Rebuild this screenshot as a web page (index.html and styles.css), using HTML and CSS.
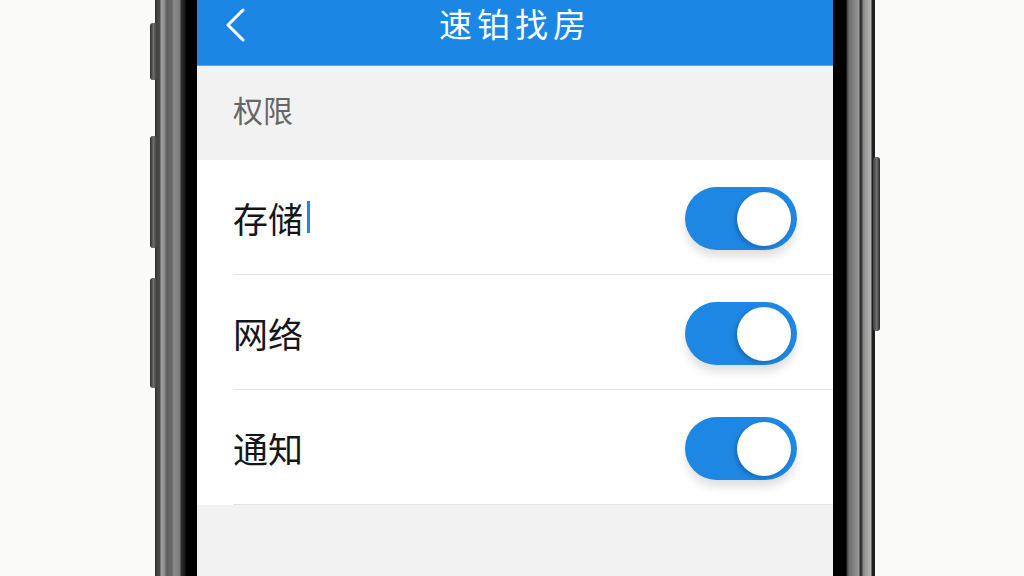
FILE: index.html
```html
<!DOCTYPE html>
<html lang="zh-CN">
<head>
    <meta charset="UTF-8">
    <meta name="viewport" content="width=device-width, initial-scale=1.0">
    <title>速铂找房 - 权限</title>
    <link rel="stylesheet" href="styles.css">
</head>
<body>
    <div class="phone">
        <span class="side-btn btn-left btn-1"></span>
        <span class="side-btn btn-left btn-2"></span>
        <span class="side-btn btn-left btn-3"></span>
        <span class="side-btn btn-right"></span>

        <div class="bezel bezel-left"></div>

        <div class="screen">
            <header class="topbar">
                <svg class="back" width="24" height="34" viewBox="0 0 24 34">
                    <polyline points="19,2 4,17 19,32" fill="none" stroke="#fff" stroke-width="3" stroke-linecap="round" stroke-linejoin="round"/>
                </svg>
                <h1>速铂找房</h1>
            </header>

            <div class="section-title">权限</div>

            <ul class="settings">
                <li class="row">
                    <span class="label">存储<span class="caret"></span></span>
                    <span class="toggle on"><span class="knob"></span></span>
                </li>
                <li class="row">
                    <span class="label">网络</span>
                    <span class="toggle on"><span class="knob"></span></span>
                </li>
                <li class="row">
                    <span class="label">通知</span>
                    <span class="toggle on"><span class="knob"></span></span>
                </li>
            </ul>

            <div class="rest"></div>
        </div>

        <div class="bezel bezel-right"></div>
    </div>
</body>
</html>
```

FILE: styles.css
```css
body {
    margin: 0;
    height: 576px;
    overflow: hidden;
    background: #fafaf8;
    font-family: "Noto Sans CJK SC", "Noto Sans", sans-serif;
}

.phone {
    position: relative;
    display: flex;
    width: 720px;
    height: 576px;
    margin-left: 155px;
}

/* frame */
.bezel {
    width: 42px;
    flex-shrink: 0;
}

.bezel-left {
    background: linear-gradient(to right,
        #2a2a2a 0, #444 2px, #4a4a4a 5px,
        #a0a0a0 6px, #8a8a8a 10px, #5e5e5e 11px,
        #6a6a6a 17px, #8c8c8c 19px, #7a7a7a 25px,
        #2e2e2e 26px, #1a1a1a 30px, #000 31px, #000 42px);
}

.bezel-right {
    background: linear-gradient(to right,
        #000 0, #000 13px, #3a3a3a 14px,
        #6c6c6c 16px, #9a9a9a 26px, #2e2e2e 27px,
        #3a3a3a 29px, #8a8a8a 30px, #a6a6a6 35px,
        #b2b2b2 38px, #222 39px, #1a1a1a 42px);
}

.side-btn {
    position: absolute;
    width: 7px;
    border-radius: 3px;
    background: linear-gradient(to right, #2c2c2c, #6e6e6e 50%, #3a3a3a);
}

.btn-left { left: -5px; }
.btn-1 { top: 23px; height: 57px; }
.btn-2 { top: 136px; height: 112px; }
.btn-3 { top: 278px; height: 110px; }

.btn-right {
    right: -5px;
    top: 157px;
    height: 174px;
    background: linear-gradient(to right, #3a3a3a, #707070 50%, #2a2a2a);
}

/* screen */
.screen {
    flex: 1;
    display: flex;
    flex-direction: column;
    background: #f2f2f2;
    overflow: hidden;
}

.topbar {
    position: relative;
    height: 66px;
    padding-bottom: 19px;
    box-sizing: border-box;
    display: flex;
    align-items: center;
    justify-content: center;
    background: #1b86e4;
    border-bottom: 1px solid #5aa6ec;
}

.topbar h1 {
    margin: 0;
    font-size: 33px;
    font-weight: 400;
    color: #fff;
    letter-spacing: 5px;
}

.back {
    position: absolute;
    left: 27px;
    top: 8px;
}

.section-title {
    height: 94px;
    padding-left: 36px;
    display: flex;
    align-items: center;
    font-size: 30px;
    color: #666;
    padding-bottom: 8px;
    box-sizing: border-box;
}

.settings {
    list-style: none;
    margin: 0;
    padding: 0 0 0 36px;
    background: #fff;
}

.row {
    height: 115px;
    box-sizing: border-box;
    padding-right: 36px;
    display: flex;
    align-items: center;
    justify-content: space-between;
    border-bottom: 1px solid #e2e2e2;
}

.label {
    font-size: 35px;
    color: #161616;
    display: flex;
    align-items: center;
}

.caret {
    display: inline-block;
    width: 3px;
    height: 32px;
    margin-left: 4px;
    background: #1e8ae6;
}

.toggle {
    position: relative;
    width: 112px;
    height: 63px;
    margin-top: 3px;
    border-radius: 32px;
    background: #1e87e4;
    box-shadow: 0 7px 9px rgba(0, 0, 0, 0.12);
}

.knob {
    position: absolute;
    right: 6px;
    top: 5px;
    width: 54px;
    height: 54px;
    border-radius: 50%;
    background: #fff;
    box-shadow: -2px 2px 4px rgba(0, 0, 0, 0.22);
}

.rest {
    flex: 1;
    background: #f2f2f2;
}
```
